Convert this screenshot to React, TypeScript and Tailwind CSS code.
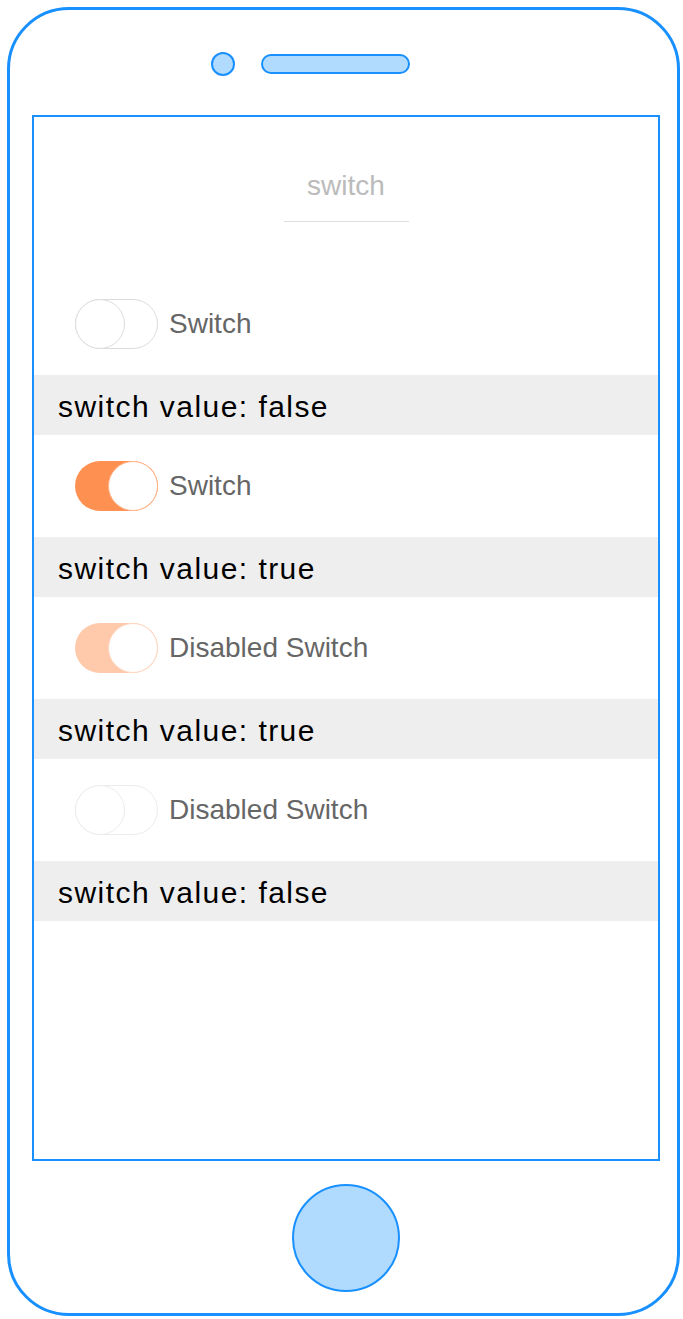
import React from 'react'

const rows = [
  { label: 'Switch', on: false, disabled: false },
  { label: 'Switch', on: true, disabled: false },
  { label: 'Disabled Switch', on: true, disabled: true },
  { label: 'Disabled Switch', on: false, disabled: true },
]

function Toggle({ on, disabled }: { on: boolean; disabled: boolean }) {
  if (on) {
    return (
      <div
        className={`flex h-[50px] w-[83px] shrink-0 items-center justify-end rounded-full ${
          disabled ? 'bg-[#ffcaab]' : 'bg-[#fe9152]'
        }`}
      >
        <div
          className={`h-[50px] w-[50px] rounded-full border bg-white ${
            disabled ? 'border-[#ffd7c0]' : 'border-[#ffb58b]'
          }`}
        />
      </div>
    )
  }
  return (
    <div
      className={`flex h-[50px] w-[83px] shrink-0 items-center rounded-full border bg-white ${
        disabled ? 'border-[#ececec]' : 'border-[#dcdcdc]'
      }`}
    >
      <div
        className={`-ml-px h-[50px] w-[50px] rounded-full border bg-white ${
          disabled ? 'border-[#ececec]' : 'border-[#dcdcdc]'
        }`}
      />
    </div>
  )
}

export default function App() {
  return (
    <div className="min-h-[1319px] bg-white p-[7px] font-['Liberation_Sans',Arial,sans-serif]">
      <div className="flex h-[1309px] w-[673px] flex-col rounded-[62px] border-[3px] border-[#1890ff]">
        <div className="ml-[201px] mt-[42px] flex items-center gap-[26px]">
          <div className="h-[24px] w-[24px] rounded-full border-2 border-[#1890ff] bg-[#b0dbff]" />
          <div className="h-[20px] w-[149px] rounded-full border-2 border-[#1890ff] bg-[#b0dbff]" />
        </div>

        <div className="ml-[22px] mt-[39px] flex h-[1046px] w-[628px] flex-col border-2 border-[#1890ff]">
          <div className="flex h-[156px] justify-center pt-[49px]">
            <div className="h-[56px] w-[125px] border-b border-[#dddddd] text-center text-[28px] leading-[40px] text-[#bbbbbb]">
              switch
            </div>
          </div>
          {rows.map((row, i) => (
            <div key={i}>
              <div className="flex h-[102px] items-center gap-[11px] pl-[41px]">
                <Toggle on={row.on} disabled={row.disabled} />
                <span className="text-[28px] text-[#666666]">{row.label}</span>
              </div>
              <div className="flex h-[60px] items-center bg-[#eeeeee] pl-[24px] pt-[2px] text-[30px] tracking-[1.45px] text-black">
                switch value: {row.on ? 'true' : 'false'}
              </div>
            </div>
          ))}
        </div>

        <div className="ml-[282px] mt-[23px] h-[108px] w-[108px] rounded-full border-2 border-[#1890ff] bg-[#b0dbff]" />
      </div>
    </div>
  )
}
